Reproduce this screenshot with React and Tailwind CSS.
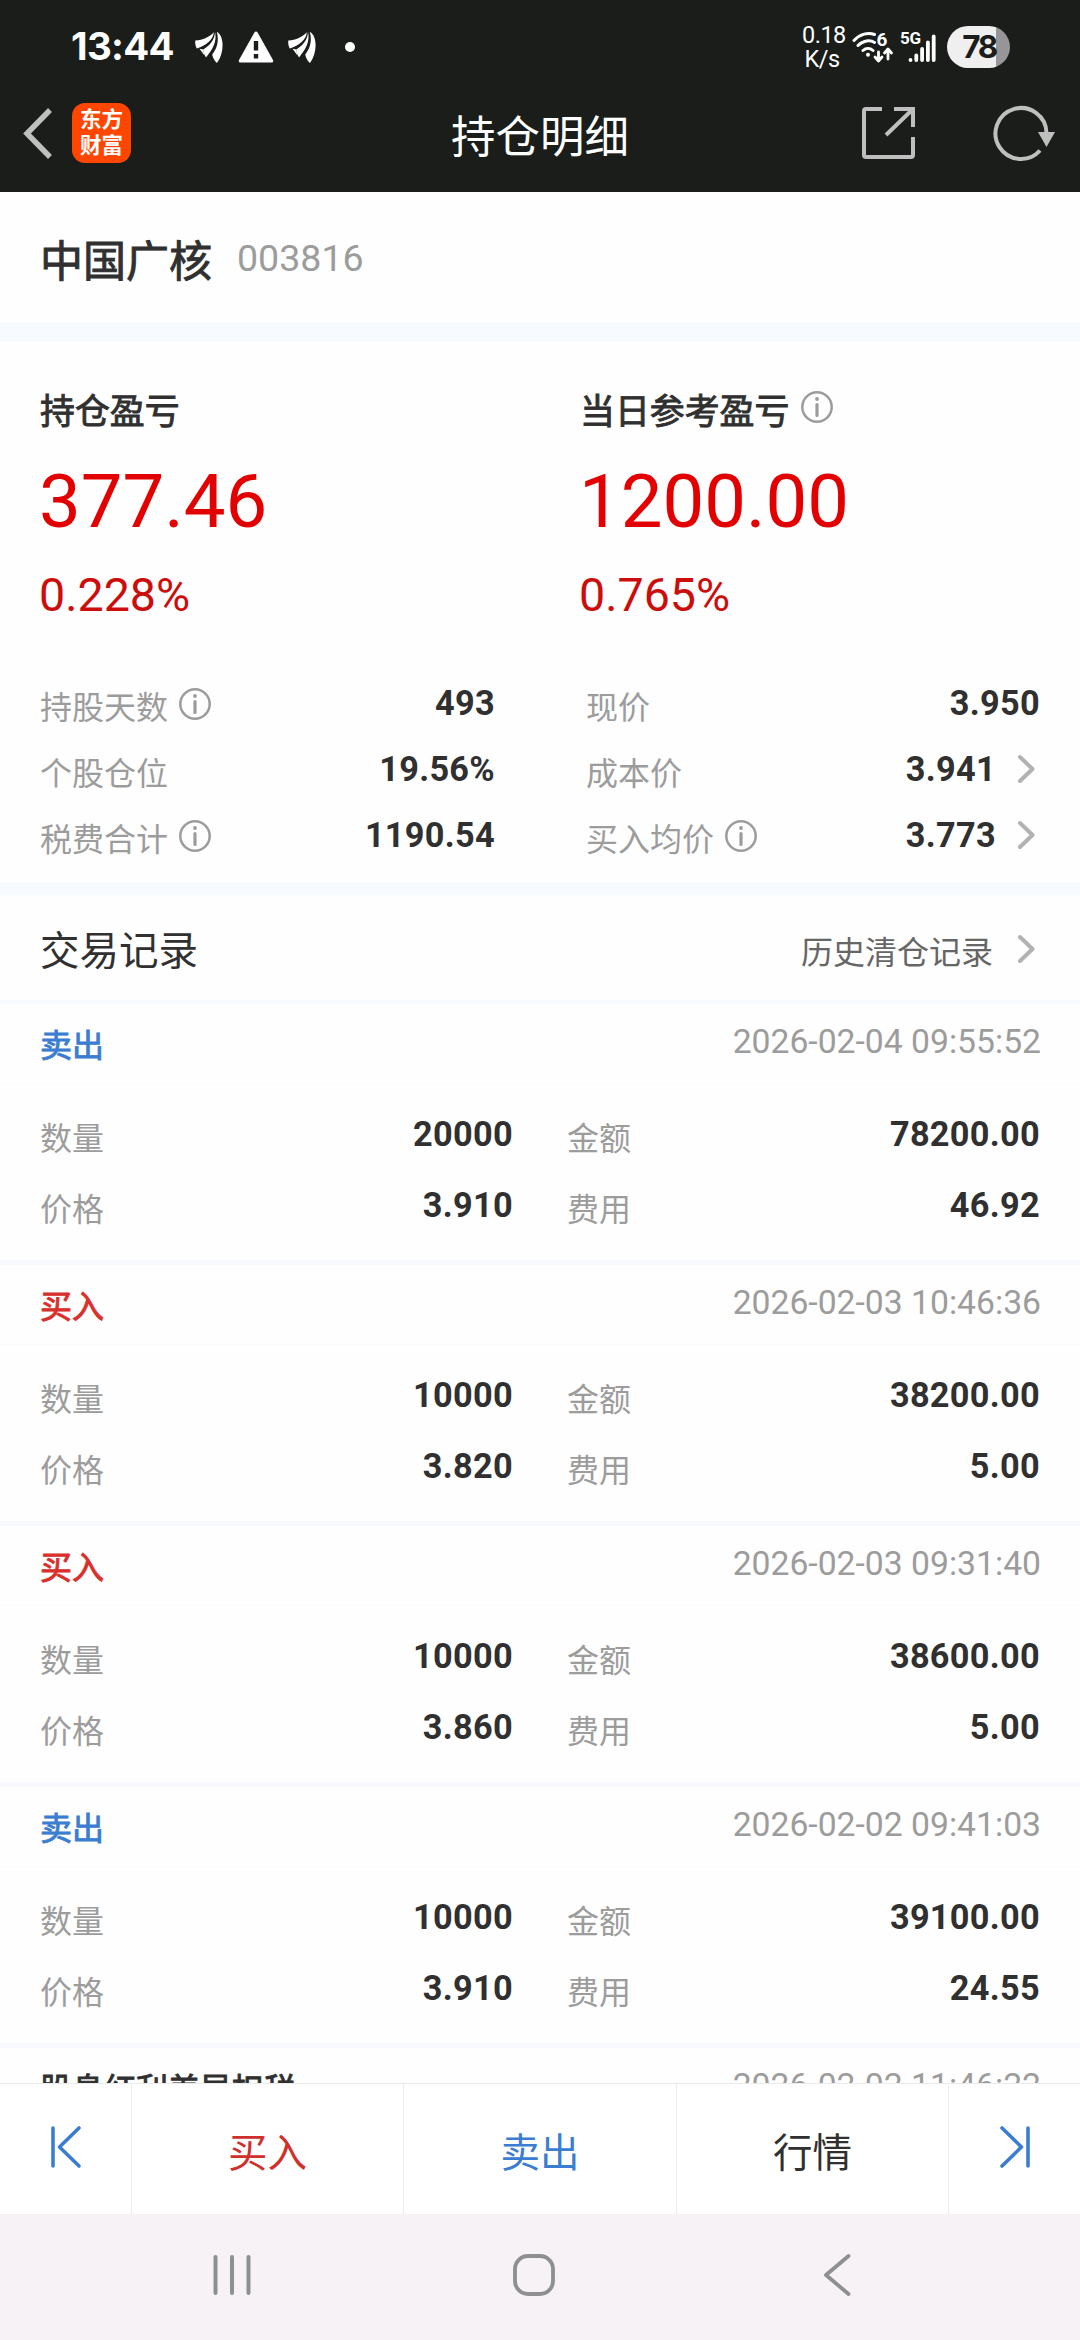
const strokeText = '[-webkit-text-stroke:0.9px_currentColor]';

const details = [
  [
    { label: '持股天数', info: true, value: '493' },
    { label: '现价', value: '3.950' },
  ],
  [
    { label: '个股仓位', value: '19.56%' },
    { label: '成本价', value: '3.941', more: true },
  ],
  [
    { label: '税费合计', info: true, value: '1190.54' },
    { label: '买入均价', info: true, value: '3.773', more: true },
  ],
];

const records = [
  { type: '卖出', tone: 'text-[#3b7dd0]', time: '2026-02-04 09:55:52', qty: '20000', amount: '78200.00', price: '3.910', fee: '46.92' },
  { type: '买入', tone: 'text-[#d8302c]', time: '2026-02-03 10:46:36', qty: '10000', amount: '38200.00', price: '3.820', fee: '5.00' },
  { type: '买入', tone: 'text-[#d8302c]', time: '2026-02-03 09:31:40', qty: '10000', amount: '38600.00', price: '3.860', fee: '5.00' },
  { type: '卖出', tone: 'text-[#3b7dd0]', time: '2026-02-02 09:41:03', qty: '10000', amount: '39100.00', price: '3.910', fee: '24.55' },
  { type: '股息红利差异扣税', tone: 'text-[#303030]', time: '2026-02-02 11:46:22', qty: '', amount: '', price: '', fee: '' },
];

function InfoIcon({ className = '' }) {
  return (
    <svg viewBox="0 0 32 32" className={'h-8 w-8 shrink-0 ' + className} fill="none" stroke="#9c9c9c">
      <circle cx="16" cy="16" r="14.7" strokeWidth="2.5" />
      <path d="M16 13.5V24.5" strokeWidth="3.2" strokeLinecap="round" />
      <circle cx="16" cy="8" r="1.9" fill="#9c9c9c" stroke="none" />
    </svg>
  );
}

function More() {
  return (
    <svg viewBox="0 0 18 30" className="mr-[5px] ml-[21px] h-[30px] w-[18px] shrink-0" fill="none" stroke="#b2b2b2" strokeWidth="4" strokeLinecap="round" strokeLinejoin="round">
      <path d="M3 3L15.5 15L3 27" />
    </svg>
  );
}

function Wing() {
  return (
    <svg viewBox="0 0 28 32" className="h-8 w-7 shrink-0" fill="#fff">
      <path d="M0.3 9.5C8 9 14.5 6 18.8 1.2C18.500 8.500 11 14.500 1.800 17.500C0.300 15 0 12 0.300 9.500Z" />
      <path d="M20 0.800C22.500 11 16.500 20 11 26.400C9.500 24 8.500 21.500 8.200 18.500C14.500 15 19.800 9 20 0.800Z" />
      <path d="M21.800 0.800C29.500 5 29.500 22 22 32C19.800 30 18 27.500 17.200 23.500C21.500 18.500 24.500 10.500 21.800 0.800Z" />
      <path d="M8.200 18.500L4.500 17.800L9.500 24.500Z" />
    </svg>
  );
}

function StatusBar() {
  return (
    <div className="flex h-[94px] items-center pl-[71px] text-white">
      <span className="w-[103px] font-['Inter'] text-[38.500px] font-bold tracking-[-0.700px]">13:44</span>
      <div className="ml-[21px] flex items-center">
        <Wing />
        <svg viewBox="0 0 36 32" className="ml-[15px] h-8 w-9" fill="#fff">
          <path fillRule="evenodd" d="M18 0.500Q19 0.500 19.600 1.600L35 29Q36 31.500 33.500 31.500H2.500Q0 31.500 1 29L16.400 1.600Q17 0.500 18 0.500ZM15.800 10V19.500H20.200V10ZM15.800 23V27.500H20.200V23Z" />
        </svg>
        <span className="ml-[14px]"><Wing /></span>
        <span className="ml-[29px] h-[10px] w-[10px] rounded-full bg-white" />
      </div>
      <div className="ml-auto flex items-center pr-[70px]">
        <div className="w-[40px] text-center font-['Roboto'] text-[23.500px] leading-[24px] tracking-[-0.500px]">
          <div>0.18</div>
          <div>K/s</div>
        </div>
        <svg viewBox="0 0 86 34" className="ml-[10px] h-[34px] w-[86px]" fill="none" stroke="#fff" strokeLinecap="round">
          <path d="M2 10.500C8 4 16 2 22.500 4.500M6 15.500C11 10.500 18 9.500 22.500 12.500M11 20.500C14 17.800 18 17.800 21 20.500" strokeWidth="3" />
          <circle cx="16" cy="24.800" r="2" fill="#fff" stroke="none" />
          <path d="M26.500 22V30M23 27L26.500 31L30 27M36 29V20M32.500 23L36 19L39.500 23" strokeWidth="2.800" strokeLinejoin="round" />
          <text x="24.500" y="15.500" fontFamily="Roboto" fontSize="19" fontWeight="700" fill="#fff" stroke="none">6</text>
          <text x="48" y="14" fontFamily="Roboto" fontSize="17" fontWeight="700" fill="#fff" stroke="none" textLength="21">5G</text>
          <path d="M58.500 30V29.900M64.300 30V25.500M70.100 30V19M75.900 30V12.500M81.700 30V6.500" strokeWidth="3.800" />
        </svg>
        <div className="ml-[9px] flex h-[42px] w-[63px] items-center justify-center overflow-hidden rounded-full bg-linear-to-r from-[#efefef] from-78% to-[#989598] to-78%">
          <span className="pl-px font-['Inter'] text-[31.500px] font-bold tracking-[-2.500px] text-[#1a1d1a]">78</span>
        </div>
      </div>
    </div>
  );
}

function TitleBar() {
  return (
    <div className="grid h-[98px] grid-cols-3 items-start">
      <div className="flex items-center pt-[9px] pl-[22px]">
        <svg viewBox="0 0 32 52" className="h-[52px] w-8" fill="none" stroke="#bfbfbf" strokeWidth="5.500">
          <path d="M28 3L5 26.500L28 50" />
        </svg>
        <div className="ml-[18px] flex h-[60px] w-[59px] flex-col items-center justify-center rounded-[13px] bg-[#ff4600] pb-[4px] text-[21.500px] leading-[26px] font-bold text-white">
          <span>东方</span>
          <span>财富</span>
        </div>
      </div>
      <h1 className="pt-[7px] text-center text-[44.500px] leading-[66px] text-white">持仓明细</h1>
      <div className="flex justify-end pt-[10px] pr-[25px]">
        <svg viewBox="0 0 56 58" className="h-[58px] w-14" fill="none" stroke="#bfbfbf" strokeWidth="4">
          <path d="M22 5H6Q4 5 4 7V51Q4 53 6 53H51Q53 53 53 51V33M34 5H53V23M52 6L26 31" />
        </svg>
        <svg viewBox="0 0 68 60" className="ml-[71px] h-[60px] w-[68px]" fill="none" stroke="#bfbfbf" strokeWidth="4">
          <path d="M53 46.500A25.500 25.500 0 1 1 59.500 29" />
          <path d="M51 28H68L59.500 43Z" fill="#bfbfbf" stroke="none" />
        </svg>
      </div>
    </div>
  );
}

function Profit({ title, amount, rate, info }) {
  return (
    <div className="w-[540px] pl-10">
      <div className="flex h-[52px] items-center">
        <span className={'text-[34.900px] leading-[52px] text-[#303030] ' + strokeText}>{title}</span>
        {info && <InfoIcon className="mb-[4px] ml-[12px]" />}
      </div>
      <div className="mt-[23px] -ml-px font-['Roboto'] text-[74.300px] leading-[88px] text-[#e30000]">{amount}</div>
      <div className="mt-[21px] -ml-px font-['Roboto'] text-[46.600px] leading-[56px] text-[#cd0c0c]">{rate}</div>
    </div>
  );
}

function Value({ children }) {
  return <span className="font-['Roboto'] text-[34.300px] leading-[40px] font-bold tracking-[0.300px] text-[#303030]">{children}</span>;
}

function Detail({ item, className }) {
  return (
    <div className={'flex h-[66px] items-center ' + className}>
      <span className="pt-[3px] text-[32px] leading-[48px] text-[#9c9c9c]">{item.label}</span>
      {item.info && <InfoIcon className="mt-px ml-[11px]" />}
      <span className="ml-auto flex items-center">
        <Value>{item.value}</Value>
        {item.more && <More />}
      </span>
    </div>
  );
}

function Pair({ label, value, className }) {
  return (
    <div className={'flex h-[71px] items-center ' + className}>
      <span className="pt-[4px] text-[32px] leading-[48px] text-[#9c9c9c]">{label}</span>
      <span className="ml-auto"><Value>{value}</Value></span>
    </div>
  );
}

function Record({ r }) {
  return (
    <section className="h-[261px] shrink-0 border-b-[5px] border-[#f7f9ff]">
      <div className="flex h-[80px] items-center border-b border-[#fbfbfb] px-10">
        <span className={'pb-[2px] text-[32px] leading-[48px] ' + r.tone + ' ' + strokeText}>{r.type}</span>
        <time className="-mr-px ml-auto pb-[4px] font-['Roboto'] text-[33.700px] leading-[40px] text-[#9c9c9c]">{r.time}</time>
      </div>
      {r.qty && (
        <div className="grid grid-cols-[513px_527px] pt-[14px] pr-10">
          <Pair label="数量" value={r.qty} className="pl-10" />
          <Pair label="金额" value={r.amount} className="pl-[54px]" />
          <Pair label="价格" value={r.price} className="pl-10" />
          <Pair label="费用" value={r.fee} className="pl-[54px]" />
        </div>
      )}
    </section>
  );
}

function ActionBar() {
  const text = 'flex items-center justify-center border-l border-[#ebebeb] text-[39.500px] leading-[58px] ';
  return (
    <div className="grid h-[131px] shrink-0 grid-cols-[131px_272px_273px_272px_132px] border-t border-[#ebebeb] bg-white">
      <div className="flex items-center justify-center">
        <svg viewBox="0 0 32 44" className="mb-[4px] h-11 w-8" fill="none" stroke="#3b7dd0" strokeWidth="3.600" strokeLinecap="round" strokeLinejoin="round">
          <path d="M3 3V41M29 3L9.500 22L29 41" />
        </svg>
      </div>
      <div className={text + 'pt-[2px] text-[#cf302c]'}>买入</div>
      <div className={text + 'pt-[2px] text-[#3b7dd0]'}>卖出</div>
      <div className={text + 'pt-[2px] text-[#303030]'}>行情</div>
      <div className="flex items-center justify-center border-l border-[#ebebeb]">
        <svg viewBox="0 0 32 44" className="mb-[4px] h-11 w-8" fill="none" stroke="#3b7dd0" strokeWidth="3.600" strokeLinecap="round" strokeLinejoin="round">
          <path d="M29 3V41M3 3L22.500 22L3 41" />
        </svg>
      </div>
    </div>
  );
}

function SystemNav() {
  return (
    <div className="flex h-[126px] shrink-0 items-start bg-[#f6f2f6] pt-[39px] pl-[210px]">
      <svg viewBox="0 0 44 44" className="h-11 w-11" fill="none" stroke="#8e908f" strokeWidth="4" strokeLinecap="round">
        <path d="M5.500 4V40M22 4V40M38.500 4V40" />
      </svg>
      <svg viewBox="0 0 44 44" className="ml-[258px] h-11 w-11" fill="none" stroke="#8e908f" strokeWidth="3.800">
        <rect x="3" y="3" width="38" height="38" rx="13" />
      </svg>
      <svg viewBox="0 0 32 44" className="ml-[265px] h-11 w-8" fill="none" stroke="#8e908f" strokeWidth="3.800" strokeLinecap="round" strokeLinejoin="round">
        <path d="M27.500 3L5 22L27.500 41" />
      </svg>
    </div>
  );
}

export default function App() {
  return (
    <div className="flex h-[2340px] w-[1080px] flex-col overflow-hidden bg-[#fefefe] font-['Noto_Sans_CJK_SC',sans-serif]">
      <header className="h-[192px] shrink-0 bg-[#1a1d1a]">
        <StatusBar />
        <TitleBar />
      </header>

      <section className="flex h-[130px] shrink-0 items-start pt-[34px] pl-10">
        <h2 className={'text-[43px] leading-[64px] text-[#303030] ' + strokeText}>中国广核</h2>
        <span className="ml-[25px] pt-[8px] font-['Roboto'] text-[37.600px] leading-[48px] text-[#9c9c9c]">003816</span>
      </section>
      <div className="h-[20px] shrink-0 bg-[#f7faff]" />

      <section className="h-[540px] shrink-0">
        <div className="flex pt-[41px]">
          <Profit title="持仓盈亏" amount="377.46" rate="0.228%" />
          <Profit title="当日参考盈亏" amount="1200.00" rate="0.765%" info />
        </div>
        <div className="pt-[47px]">
          {details.map(([left, right]) => (
            <div key={left.label} className="grid grid-cols-[495px_545px]">
              <Detail item={left} className="pl-10" />
              <Detail item={right} className="pl-[91px]" />
            </div>
          ))}
        </div>
      </section>
      <div className="h-[13px] shrink-0 bg-[#f7faff]" />

      <section className="flex h-[109px] shrink-0 items-center border-b-[4px] border-[#f7faff] pr-10 pl-10">
        <h3 className="text-[39.500px] leading-[58px] text-[#303030]">交易记录</h3>
        <span className="ml-auto flex items-center pt-[2px]">
          <span className="pt-[3px] text-[32px] leading-[48px] text-[#666]">历史清仓记录</span>
          <span className="ml-[3px] flex"><More /></span>
        </span>
      </section>

      <main className="flex min-h-0 flex-1 flex-col overflow-hidden">
        {records.map((r) => (
          <Record key={r.time} r={r} />
        ))}
      </main>

      <ActionBar />
      <SystemNav />
    </div>
  );
}
